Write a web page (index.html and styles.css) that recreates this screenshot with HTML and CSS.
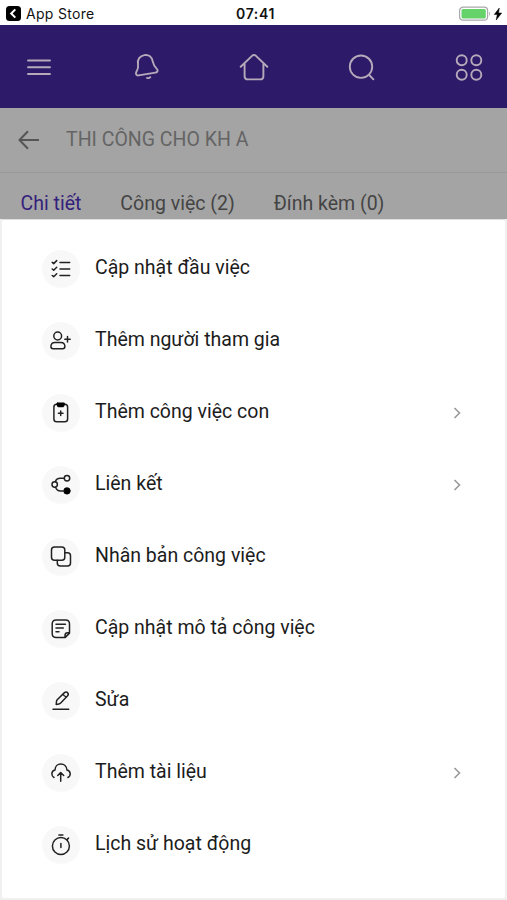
FILE: index.html
```html
<!DOCTYPE html>
<html lang="vi">
<head>
<meta charset="utf-8">
<title>Công việc</title>
<link rel="stylesheet" href="styles.css">
</head>
<body>
<div class="statusbar">
  <div class="back-app">
    <svg width="15" height="15" viewBox="0 0 15 15"><rect width="15" height="15" rx="3.5" fill="#000"/><path d="M9.3 3.400 5.200 7.500l4.100 4.100" fill="none" stroke="#fff" stroke-width="2"/></svg>
    <span class="app-name">App Store</span>
  </div>
  <span class="clock">07:41</span>
  <div class="battery">
    <svg width="45" height="16" viewBox="0 0 45 16"><rect x=".6" y="1.200" width="28" height="13" rx="3.500" fill="#fff" stroke="#a9a9a9" stroke-width="1.200"/><rect x="2.500" y="3" width="24.300" height="9.400" rx="1.500" fill="#65d36a"/><path d="M30 5.500q1.800 2 0 4.500z" fill="#aaa"/><path d="M40.300 2 35.300 8.500h3L37.200 14l5.500-7h-3.200z" fill="#000" stroke="#000" stroke-width=".5"/></svg>
  </div>
</div>
<header class="topbar">
  <svg class="nav-icon" viewBox="0 0 30 30"><path d="M4 7.500h22M4 14.300h22M4 21h22"/></svg>
  <svg class="nav-icon" viewBox="0 0 30 30"><path d="M12.300 2.100C7.800 2.800 5.200 6.500 6 11c.7 4.200-.2 5.400-1.700 8-1 2 .1 3.700 2.200 3.400l17-2.800c2.200-.4 2.800-2.300 1.300-3.700-2.200-2.100-3.200-3.200-4-7.300-.8-4.700-4.100-7.200-8.500-6.500z"/><path d="M15 24.900q2 .7 3.300-.7"/></svg>
  <svg class="nav-icon" viewBox="0 0 30 30"><path d="M1.700 13.800 13.300 2.600q1.700-1.400 3.400 0l11.600 11.200M5.600 10.800v12.400q0 3.200 3.200 3.200h12.400q3.200 0 3.200-3.200V10.800"/></svg>
  <svg class="nav-icon" viewBox="0 0 30 30"><circle cx="14" cy="13.700" r="11.200"/><path d="m22.200 22 4.200 4.300"/></svg>
  <svg class="nav-icon" viewBox="0 0 30 30"><circle cx="7.700" cy="7.200" r="5"/><circle cx="22.300" cy="7.200" r="5"/><circle cx="7.700" cy="21.700" r="5"/><circle cx="22.300" cy="21.700" r="5"/></svg>
</header>
<div class="titlebar">
  <svg class="back" viewBox="0 0 22 20"><path d="M21 10H1.500M10 1.300 1.500 10l8.500 8.700"/></svg>
  <h1 class="title">THI CÔNG CHO KH A</h1>
</div>
<nav class="tabs">
  <span class="tab active">Chi tiết</span>
  <span class="tab">Công việc (2)</span>
  <span class="tab">Đính kèm (0)</span>
</nav>
<main class="sheet">
  <div class="row">
    <svg class="icon" viewBox="0 0 38 38"><path d="M18 12.500h9.700M18 19h9.700M18 25.500h9.700M10.200 12.400l1.500 1.200 3-3M10.200 19l1.500 1.200 3-3M10.200 25.500l1.500 1.200 3-3"/></svg>
    <span class="label">Cập nhật đầu việc</span>
  </div>
  <div class="row">
    <svg class="icon" viewBox="0 0 38 38"><circle cx="15.700" cy="14" r="3.900"/><path d="M12.800 20.500h6.200c2.300 0 3.800 1.800 3.900 4 0 1.400-.8 2.200-2.200 2.200h-9.600c-1.400 0-2.200-.8-2.200-2.200.1-2.200 1.600-4 3.900-4zM25.500 14.500v5.400M22.800 17.200h5.400"/></svg>
    <span class="label">Thêm người tham gia</span>
  </div>
  <div class="row">
    <svg class="icon" viewBox="0 0 38 38"><rect x="11.900" y="10.300" width="13.700" height="17.500" rx="2.800"/><path class="solid" d="M15.500 8.800h6.400q1 0 .8 1.200l-.3 1.500q-.3 1.500-1.800 1.500h-3.800q-1.500 0-1.800-1.500l-.3-1.500q-.2-1.200.8-1.200z"/><path d="M18.700 17v4.600M16.400 19.300h4.600"/></svg>
    <span class="label">Thêm công việc con</span>
    <svg class="chevron" viewBox="0 0 8 12"><path d="m1.500 1 5 5-5 5"/></svg>
  </div>
  <div class="row">
    <svg class="icon" viewBox="0 0 38 38"><circle cx="25" cy="12.200" r="2.700"/><circle cx="12.700" cy="18.500" r="2.700"/><circle class="solid" cx="25" cy="24.900" r="3.300"/><path d="M22.300 12.200h-4q-4 0-5 3.600M13.500 21.200q1.500 3.700 5 3.700H22"/></svg>
    <span class="label">Liên kết</span>
    <svg class="chevron" viewBox="0 0 8 12"><path d="m1.500 1 5 5-5 5"/></svg>
  </div>
  <div class="row">
    <svg class="icon" viewBox="0 0 38 38"><rect x="9.500" y="9" width="13.300" height="13.300" rx="3"/><path d="M22.800 14.700h2.700q3 0 3 3v7.300q0 3-3 3h-7.200q-3 0-3-3v-2.700"/></svg>
    <span class="label">Nhân bản công việc</span>
  </div>
  <div class="row">
    <svg class="icon" viewBox="0 0 38 38"><path d="M23 27.600h-8.800q-4 0-4-4v-9.700q0-4 4-4h9.300q4 0 4 4v9.200zM27.500 22.700h-1.800q-2.700 0-2.700 2.700v2.200"/><path d="M14 14.200h9.500M14 18h7.300M14 21.800h3"/></svg>
    <span class="label">Cập nhật mô tả công việc</span>
  </div>
  <div class="row">
    <svg class="icon" viewBox="0 0 38 38"><path d="M14.200 22.500l.3-3.200q.1-.9.700-1.600l7-6.800q1.800-1.500 3.400-.2 1.400 1.600-.2 3.400l-6.700 7q-.8.900-1.800 1zM21.200 11.900q.5 2.500 3.200 3.100M11 27.200h15.700"/></svg>
    <span class="label">Sửa</span>
  </div>
  <div class="row">
    <svg class="icon" viewBox="0 0 38 38"><path d="M12 23.500c-2.800-1.500-3.200-6.400 1-7.400 0-8.300 11.600-8.300 12 0 4.200 1 4 5.900.9 7.400M18.700 27.300v-8.500M15.700 21.500l3-3 3 3"/></svg>
    <span class="label">Thêm tài liệu</span>
    <svg class="chevron" viewBox="0 0 8 12"><path d="m1.500 1 5 5-5 5"/></svg>
  </div>
  <div class="row">
    <svg class="icon" viewBox="0 0 38 38"><circle cx="18.900" cy="20" r="8.500"/><path d="M16.900 9h4M18.900 17.600v3.800M25 13.600l1.500-1.500"/></svg>
    <span class="label">Lịch sử hoạt động</span>
  </div>
</main>
</body>
</html>
```
FILE: styles.css
```css
* { box-sizing: border-box; }
body {
  margin: 0;
  width: 507px;
  height: 900px;
  overflow: hidden;
  display: flex;
  flex-direction: column;
  background: #f0f0f0;
  font-family: Roboto, "Liberation Sans", sans-serif;
}
svg { flex: none; display: block; }
.statusbar {
  height: 25px;
  padding: 2px 3px 0 6px;
  display: grid;
  grid-template-columns: 1fr auto 1fr;
  align-items: center;
  background: #fff;
  color: #111;
  font-family: Inter, sans-serif;
}
.back-app { display: flex; align-items: center; gap: 5px; }
.app-name { font-size: 14px; letter-spacing: 0.3px; white-space: nowrap; }
.clock { padding-left: 1px; font-size: 14px; font-weight: 600; letter-spacing: 0.6px; }
.battery { justify-self: end; }
.topbar {
  height: 83px;
  padding: 3px 23px 0 24px;
  display: flex;
  align-items: center;
  justify-content: space-between;
  background: #2d1b69;
}
.nav-icon {
  width: 30px;
  height: 30px;
  fill: none;
  stroke: #b5a9ba;
  stroke-width: 1.9;
  stroke-linecap: round;
  stroke-linejoin: round;
}
.titlebar {
  height: 65px;
  padding: 0 18px;
  display: flex;
  align-items: center;
  gap: 26px;
  background: #a4a4a4;
  border-bottom: 1px solid #999;
}
.back { width: 22px; height: 20px; fill: none; stroke: #555; stroke-width: 2; }
.title { margin: 0 0 2px; font-size: 19.5px; font-weight: 400; color: #646464; white-space: nowrap; }
.tabs {
  height: 46px;
  padding: 14px 20.5px 0;
  display: flex;
  align-items: center;
  gap: 39px;
  background: #a4a4a4;
  font-size: 19.5px;
  color: #444;
}
.tab { white-space: nowrap; }
.tab.active { color: #34217c; }
.sheet {
  height: 681px;
  padding: 13px 0 0 40px;
  background: #fff;
  border: 2px solid #f0f0f0;
  border-top: 1px solid #dedede;
  border-radius: 4px;
}
.row { height: 72px; padding-right: 44px; display: flex; align-items: center; }
.icon {
  width: 38px;
  height: 38px;
  border-radius: 50%;
  background: #f8f8f8;
  fill: none;
  stroke: #222;
  stroke-width: 1.5;
  stroke-linecap: round;
  stroke-linejoin: round;
}
.icon .solid { fill: #000; stroke: #000; stroke-width: 0.5; }
.label { margin: 0 auto 3px 15px; font-size: 19.5px; color: #1c1c1c; white-space: nowrap; }
.chevron { width: 8px; height: 12px; fill: none; stroke: #999; stroke-width: 1.6; }
```
